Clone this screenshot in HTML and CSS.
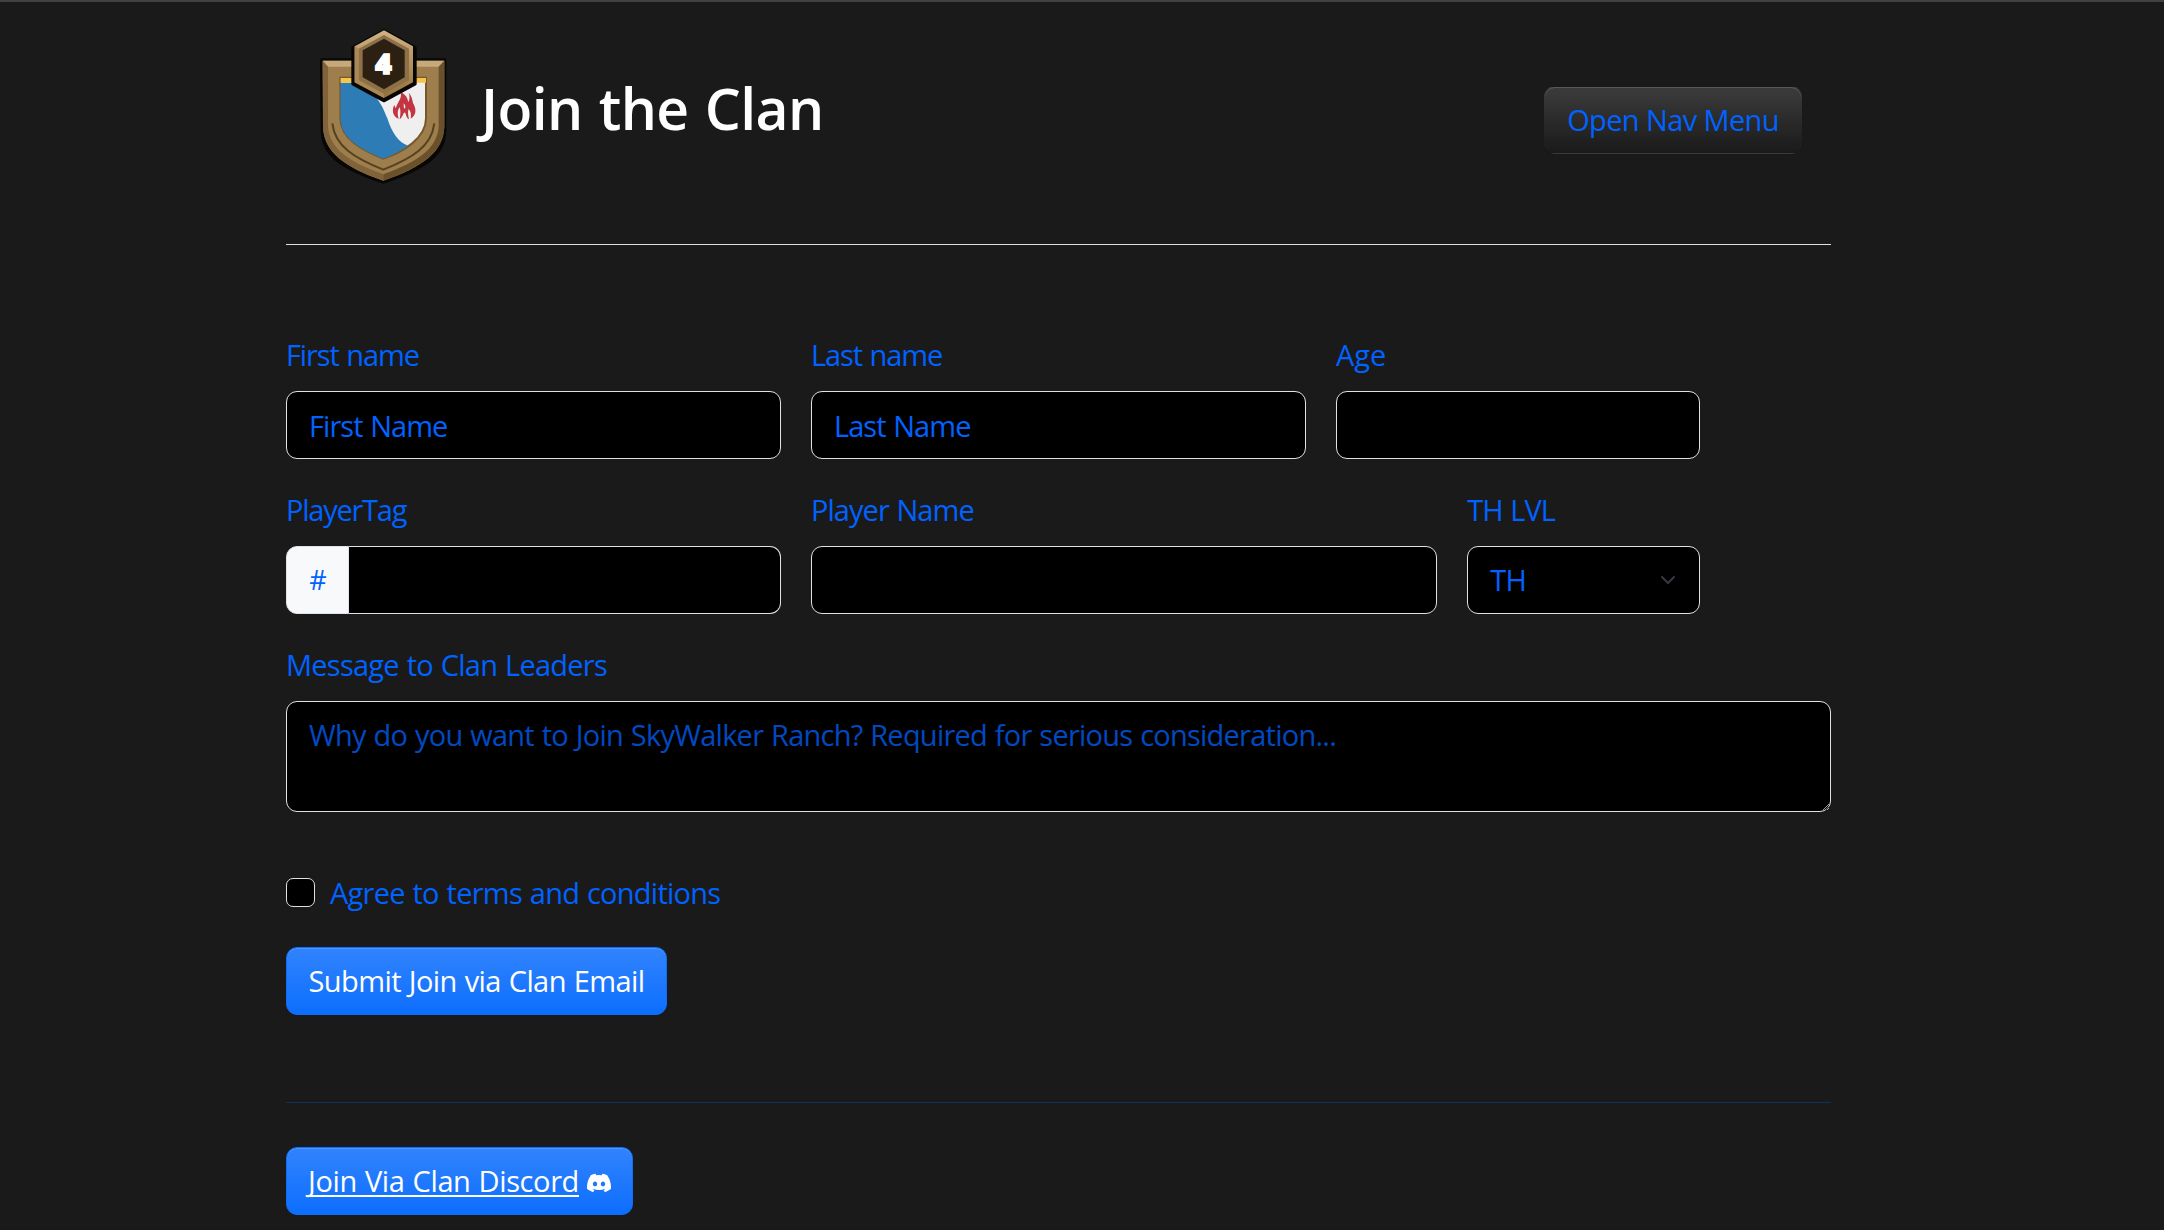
FILE: index.html
```html
<!DOCTYPE html>
<html lang="en">
<head>
<meta charset="utf-8">
<title>Join the Clan</title>
<link rel="stylesheet" href="styles.css">
</head>
<body>
<div class="container">
  <header class="header">
    <svg class="badge" viewBox="0 0 510 570" aria-hidden="true">
      <defs>
        <linearGradient id="hexEdge" x1="0" y1="0" x2="0" y2="1">
          <stop offset="0" stop-color="#cfb183"/><stop offset="1" stop-color="#94713a"/>
        </linearGradient>
        <clipPath id="field"><path d="M121 203H378V325C378 385 310 425 250 446C185 420 121 385 121 325Z"/></clipPath>
      </defs>
      <path d="M66 151H433V360C433 430 385 470 250 515C115 470 68 430 68 360Z" fill="#000" stroke="#080705" stroke-width="12" stroke-linejoin="round"/>
      <path d="M68 152H433V350C430 425 370 470 250 512C130 470 72 425 69 350Z" fill="#9e7e4c"/>
      <path d="M68 152H433L416 170H84Z" fill="#c6aa7c"/>
      <path d="M68 152L84 170V350C90 420 150 455 250 493V512C130 470 72 425 69 350Z" fill="#80633a"/>
      <path d="M433 152L416 170V350C410 420 350 455 250 493V512C370 470 430 425 433 350Z" fill="#6b512b"/>
      <path d="M97 340C105 410 165 445 250 479C335 445 395 410 403 340" fill="none" stroke="#57421f" stroke-width="6"/>
      <path d="M121 203H378V325C378 385 310 425 250 446C185 420 121 385 121 325Z" fill="#efefef" stroke="#77582b" stroke-width="6"/>
      <g clip-path="url(#field)">
        <path d="M121 218H157C225 240 245 280 262 325C276 369 295 398 326 408L250 450L115 390Z" fill="#2d7cb6"/>
        <path d="M118 203H382V218H118Z" fill="#f5c64b"/>
      </g>
      <path d="M302 246C322 257 323 268 325 276C330 270 329 256 326 248C339 262 336 275 342 285C350 300 347 318 332 326C335 309 330 302 326 297C323 303 324 315 327 328C318 324 319 312 314 307C308 312 308 322 299 328C301 315 303 302 299 292C291 302 293 315 296 326C277 319 275 299 283 284C284 289 285 292 288 293C292 277 307 266 302 246Z" fill="#c33541"/>
      <path d="M311 280C317 286 317 291 315 296C309 294 312 287 311 280Z" fill="#efefef"/>
      <path d="M252 61L346 112V222L252 273L158 222V112Z" fill="#070604" stroke="#070604" stroke-width="8" stroke-linejoin="round"/>
      <path d="M252 61L339 109V217L252 264L164 217V109Z" fill="url(#hexEdge)"/>
      <path d="M252 75L327 116V211L252 251L176 211V116Z" fill="#8d7047"/>
      <path d="M164 109L176 116V211L252 251V264L164 217Z" fill="#aa8856"/>
      <path d="M252 86L314 121V202L252 238L188 202V121Z" fill="#2c2012"/>
      <text class="badge-level" x="250" y="193" text-anchor="middle">4</text>
    </svg>
    <h1 class="title">Join the Clan</h1>
    <button class="btn btn-nav" type="button">Open Nav Menu</button>
  </header>

  <form class="form">
    <div class="field col-4">
      <label class="label tight" for="first">First name</label>
      <input class="control" id="first" type="text" value="First Name">
    </div>
    <div class="field col-4">
      <label class="label tight" for="last">Last name</label>
      <input class="control" id="last" type="text" value="Last Name">
    </div>
    <div class="field col-3">
      <label class="label age" for="age">Age</label>
      <input class="control" id="age" type="text">
    </div>
    <div class="field col-4 row-start">
      <label class="label tag" for="tag">PlayerTag</label>
      <div class="group">
        <span class="addon">#</span>
        <input class="control" id="tag" type="text">
      </div>
    </div>
    <div class="field col-5">
      <label class="label player" for="player">Player Name</label>
      <input class="control" id="player" type="text">
    </div>
    <div class="field col-2">
      <label class="label player" for="th">TH LVL</label>
      <div class="control select" id="th"><span>TH</span>
        <svg class="chevron" viewBox="0 0 16 16"><path d="m2 5 6 6 6-6" fill="none" stroke="#343a40" stroke-width="2" stroke-linecap="round" stroke-linejoin="round"/></svg>
      </div>
    </div>
    <div class="field col-12">
      <label class="label" for="message">Message to Clan Leaders</label>
      <textarea class="control message" id="message" placeholder="Why do you want to Join SkyWalker Ranch? Required for serious consideration..."></textarea>
    </div>
    <div class="col-12 check">
      <input class="checkbox" id="terms" type="checkbox">
      <label class="terms" for="terms">Agree to terms and conditions</label>
    </div>
    <div class="col-12">
      <button class="btn btn-primary submit" type="button">Submit Join via Clan Email</button>
    </div>
  </form>

  <hr class="rule">

  <button class="btn btn-primary discord" type="button"><span class="link">Join Via Clan Discord</span>
    <svg class="discord-icon" viewBox="0 0 16 16" fill="currentColor"><path d="M13.545 2.907a13.227 13.227 0 0 0-3.257-1.011.05.05 0 0 0-.052.025c-.141.25-.297.577-.406.833a12.19 12.19 0 0 0-3.658 0 8.258 8.258 0 0 0-.412-.833.051.051 0 0 0-.052-.025c-1.125.194-2.22.534-3.257 1.011a.041.041 0 0 0-.021.018C.356 6.024-.213 9.047.066 12.032c.001.014.01.028.021.037a13.276 13.276 0 0 0 3.995 2.02.05.05 0 0 0 .056-.019c.308-.42.582-.863.818-1.329a.05.05 0 0 0-.01-.059.051.051 0 0 0-.018-.011 8.875 8.875 0 0 1-1.248-.595.05.05 0 0 1-.02-.066.051.051 0 0 1 .015-.019c.084-.063.168-.129.248-.195a.05.05 0 0 1 .051-.007c2.619 1.196 5.454 1.196 8.041 0a.052.052 0 0 1 .053.007c.08.066.164.132.248.195a.051.051 0 0 1-.004.085 8.254 8.254 0 0 1-1.249.594.05.05 0 0 0-.03.03.052.052 0 0 0 .003.041c.24.465.515.909.817 1.329a.05.05 0 0 0 .056.019 13.235 13.235 0 0 0 4.001-2.02.049.049 0 0 0 .021-.037c.334-3.451-.559-6.449-2.366-9.106a.034.034 0 0 0-.02-.019Zm-8.198 7.307c-.789 0-1.438-.724-1.438-1.612 0-.889.637-1.613 1.438-1.613.807 0 1.45.73 1.438 1.613 0 .888-.637 1.612-1.438 1.612Zm5.316 0c-.788 0-1.438-.724-1.438-1.612 0-.889.637-1.613 1.438-1.613.807 0 1.451.73 1.438 1.613 0 .888-.631 1.612-1.438 1.612Z"/></svg>
  </button>
</div>
</body>
</html>
```
FILE: styles.css
```css
* { box-sizing: border-box; }

body {
  margin: 0;
  height: 1230px;
  overflow: hidden;
  border-top: 2px solid #414141;
  background: #1a1a1a;
  color: #0062ff;
  font: 29px/44px "Open Sans", "Noto Sans", sans-serif;
  letter-spacing: -0.75px;
  word-spacing: 1px;
}

.container {
  width: 1545px;
  margin-left: 286px;
}

.header {
  display: flex;
  align-items: flex-start;
  height: 243px;
  padding: 8px 29px 0 14px;
  border-bottom: 1px solid #dee2e6;
}

.badge {
  flex: none;
  width: 170px;
  height: 190px;
}

.badge-level {
  fill: #fff;
  stroke: #fff;
  stroke-width: 5px;
  font: 800 84px/1 "Open Sans", sans-serif;
  letter-spacing: 0;
}

.title {
  flex: 1;
  margin: 63px 0 0 11px;
  color: #fff;
  font-size: 57px;
  font-weight: 600;
  line-height: 70px;
  letter-spacing: -0.6px;
  word-spacing: 2px;
  white-space: nowrap;
}

.btn {
  display: flex;
  align-items: center;
  justify-content: center;
  height: 68px;
  padding: 0 0 1px;
  border: 1px solid transparent;
  border-radius: 11px;
  font: inherit;
  white-space: nowrap;
  box-shadow: inset 0 1px 0 rgba(255, 255, 255, 0.15), 0 1px 1px rgba(0, 0, 0, 0.075);
}

.btn-nav {
  width: 258px;
  margin-top: 76px;
  padding-bottom: 0;
  color: #0062ff;
  letter-spacing: -0.62px;
  background: #1a1a1a linear-gradient(rgba(255, 255, 255, 0.15), rgba(255, 255, 255, 0));
}

.btn-primary {
  border-color: #0d6efd;
  color: #fff;
  background: #0d6efd linear-gradient(rgba(255, 255, 255, 0.15), rgba(255, 255, 255, 0));
}

/* Fields sit on a 12-column grid whose last column is left empty in short rows. */
.form {
  display: grid;
  grid-template-columns: repeat(12, minmax(0, 1fr));
  column-gap: 30px;
  margin-top: 87px;
}

.row-start { grid-column-start: 1; }
.col-2 { grid-column-end: span 2; }
.col-3 { grid-column-end: span 3; }
.col-4 { grid-column-end: span 4; }
.col-5 { grid-column-end: span 5; }
.col-12 { grid-column: 1 / -1; }

.field {
  display: flex;
  flex-direction: column;
  min-height: 155px;
}

.label {
  height: 44px;
  padding-top: 1px;
  margin-bottom: 15px;
}

.tight { letter-spacing: -1.1px; }
.player { letter-spacing: -0.95px; }
.age { letter-spacing: 0; }
.tag { letter-spacing: -1.25px; }

.control {
  width: 100%;
  height: 68px;
  margin: 0;
  padding: 0 22px;
  border: 1px solid #dee2e6;
  border-radius: 11px;
  background: #000;
  color: #0062ff;
  font: inherit;
  letter-spacing: -0.95px;
  word-spacing: 1px;
}

.group { display: flex; }

.group .control {
  flex: 1;
  min-width: 0;
  border-left-width: 0;
  border-radius: 0 11px 11px 0;
}

.addon {
  width: 63px;
  height: 68px;
  border: 1px solid #dee2e6;
  border-radius: 11px 0 0 11px;
  background: #f8f9fa;
  font-size: 27px;
  line-height: 66px;
  text-align: center;
}

.select {
  display: flex;
  align-items: center;
  justify-content: space-between;
  letter-spacing: -0.6px;
}

.chevron {
  width: 16px;
  height: 16px;
  margin-right: 1px;
}

.message {
  display: block;
  height: 111px;
  padding: 11px 22px;
  resize: vertical;
  letter-spacing: -0.76px;
}

.message::placeholder {
  color: #0062ff;
  opacity: 0.75;
}

.check {
  display: flex;
  align-items: center;
  height: 44px;
  margin-top: 58px;
}

.checkbox {
  appearance: none;
  width: 29px;
  height: 29px;
  margin: 0 15px 0 0;
  border: 1px solid #dee2e6;
  border-radius: 7px;
  background: #000;
}

.terms { padding-top: 2px; }

.submit {
  width: 381px;
  margin-top: 33px;
  letter-spacing: -0.6px;
  word-spacing: 1px;
}

.rule {
  height: 1px;
  margin: 87px 0 44px;
  border: 0;
  background: #0062ff;
  opacity: 0.3;
}

.discord {
  width: 347px;
  gap: 8px;
  letter-spacing: -0.4px;
  word-spacing: 1px;
}

.link {
  text-decoration: underline;
  text-decoration-thickness: 2px;
  text-underline-offset: 3px;
  text-decoration-skip-ink: none;
}

.discord-icon {
  width: 24px;
  height: 24px;
  margin-top: 5px;
}
```
